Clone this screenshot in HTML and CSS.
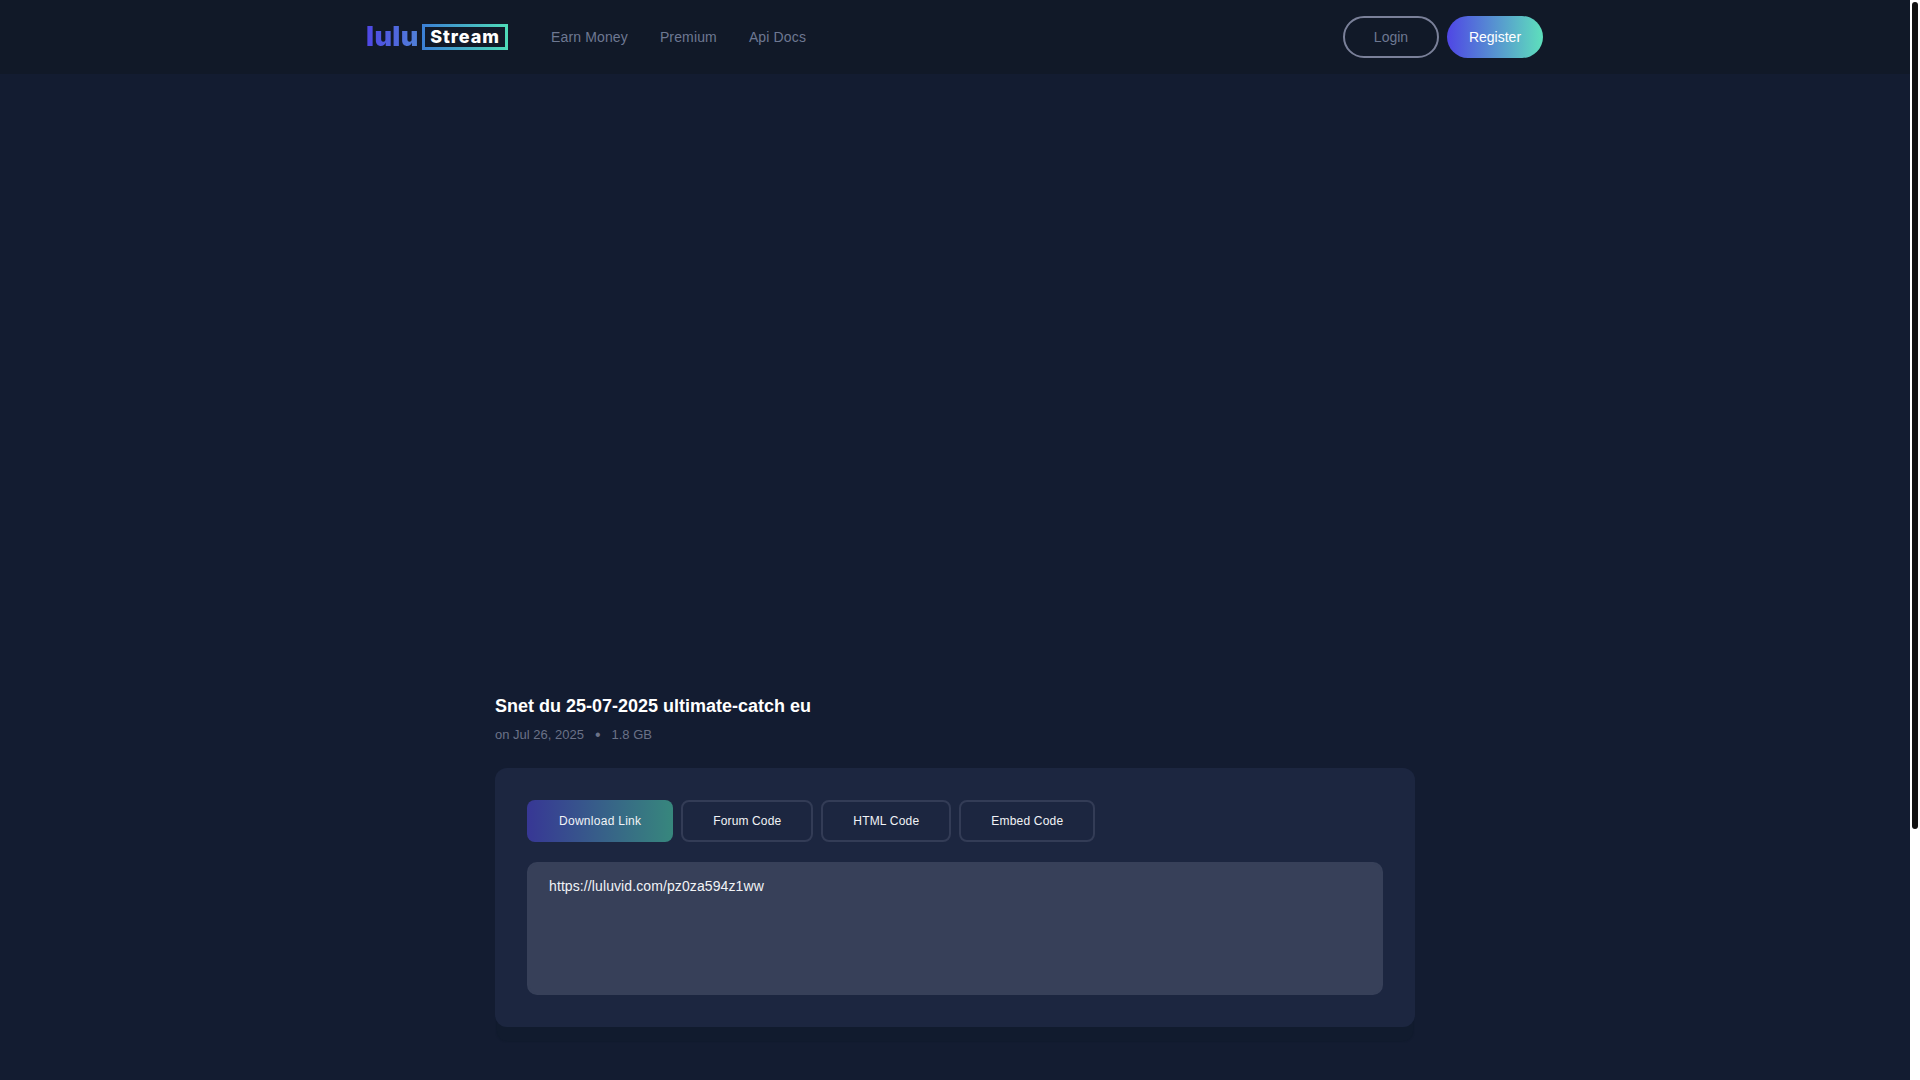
FILE: index.html
```html
<!DOCTYPE html>
<html lang="en">
<head>
<meta charset="utf-8">
<title>Snet du 25-07-2025 ultimate-catch eu</title>
<link rel="stylesheet" href="styles.css">
</head>
<body>
<div class="page">
<header class="nav">
  <div class="nav-inner">
    <a class="logo" href="#">
      <span class="logo-lulu">lulu</span>
      <span class="logo-box"><span class="logo-stream">Stream</span></span>
    </a>
    <nav class="links">
      <a href="#">Earn Money</a>
      <a href="#">Premium</a>
      <a href="#">Api Docs</a>
    </nav>
    <div class="auth">
      <a class="btn btn-login" href="#">Login</a>
      <a class="btn btn-register" href="#">Register</a>
    </div>
  </div>
</header>
<main class="main">
  <div class="player"></div>
  <h1 class="title">Snet du 25-07-2025 ultimate-catch eu</h1>
  <p class="meta"><span>on Jul 26, 2025</span><span class="dot">•</span><span>1.8 GB</span></p>
  <section class="card">
    <div class="tabs">
      <button class="tab tab-active">Download Link</button>
      <button class="tab tab-forum">Forum Code</button>
      <button class="tab">HTML Code</button>
      <button class="tab">Embed Code</button>
    </div>
    <textarea class="code" readonly>https://luluvid.com/pz0za594z1ww</textarea>
  </section>
</main>
</div>
<div class="scrollbar"><div class="scrollbar-thumb"></div></div>
</body>
</html>
```
FILE: styles.css
```css
* { box-sizing: border-box; }
html { background: #131c31; }
body {
  margin: 0;
  height: 1080px;
  overflow: hidden;
  display: flex;
  background: #131c31;
  font-family: "Liberation Sans", Arial, sans-serif;
  color: #fff;
}
a { text-decoration: none; }

.page { flex: 1; min-width: 0; }
.scrollbar {
  width: 10px;
  flex: none;
  padding: 2px;
  background: #fff;
}
.scrollbar-thumb {
  height: 827px;
  background: #111;
  border-radius: 3px;
}

.nav { height: 74px; background: #111928; }
.nav-inner {
  width: 1176px;
  height: 100%;
  margin: 0 auto;
  display: flex;
  align-items: center;
}
.logo { display: flex; align-items: center; gap: 4px; width: 184px; }
.logo-lulu {
  width: 52px;
  margin-left: -1px;
  font-family: Inter, sans-serif;
  font-weight: 900;
  font-size: 27px;
  line-height: 26px;
  letter-spacing: .4px;
  background: linear-gradient(90deg, #4f46e5, #5080d8);
  -webkit-background-clip: text;
  background-clip: text;
  color: transparent;
}
.logo-box {
  width: 86px;
  height: 26px;
  padding: 3px;
  background: linear-gradient(90deg, #3b7fd6, #4fdcb8);
  display: flex;
}
.logo-stream {
  flex: 1;
  background: #111928;
  font-family: Inter, sans-serif;
  font-weight: 800;
  font-size: 18px;
  line-height: 20px;
  letter-spacing: .9px;
  text-align: center;
  color: #fff;
}
.links { display: flex; gap: 32px; flex: 1; }
.links a { font-size: 14px; letter-spacing: .14px; color: #6e7892; }
.auth { display: flex; gap: 8px; }
.btn {
  width: 96px;
  height: 42px;
  border-radius: 21px;
  display: flex;
  align-items: center;
  justify-content: center;
  font-size: 14px;
}
.btn-login { border: 2px solid #7a8099; color: #6e7892; }
.btn-register { background: linear-gradient(90deg, #4f46e5, #5ee0bc); color: #fff; }

.main { width: 920px; margin: 0 auto; }
.player { height: 619px; }
.title {
  margin: 0;
  font-size: 18px;
  line-height: 26px;
  font-weight: 700;
  color: #fff;
}
.meta {
  margin: 6px 0 0;
  height: 19px;
  font-size: 13px;
  line-height: 20px;
  color: #6b7288;
  display: flex;
  gap: 11px;
}
.dot { font-size: 16px; }
.card {
  margin-top: 24px;
  height: 259px;
  padding: 32px;
  background: #1c2640;
  border-radius: 12px;
  box-shadow: 0 16px 1px -1px #111b2e;
}
.tabs { display: flex; gap: 8px; }
.tab {
  height: 42px;
  padding: 0 30px;
  border: 2px solid #333c56;
  border-radius: 8px;
  background: transparent;
  font-family: inherit;
  font-size: 12px;
  letter-spacing: .2px;
  color: #f1f3f6;
}
.tab-active {
  letter-spacing: .28px;
  border-color: transparent;
  background: linear-gradient(90deg, #373795, #37877d) border-box;
}
.tab-forum { letter-spacing: .12px; }
.code {
  display: block;
  width: 856px;
  height: 133px;
  margin-top: 20px;
  padding: 12px 20px;
  border: 2px solid #374059;
  border-radius: 10px;
  background: #374059;
  font-family: inherit;
  font-size: 14px;
  line-height: 20px;
  letter-spacing: .1px;
  color: #f1f3f6;
  resize: none;
  outline: none;
}
```
